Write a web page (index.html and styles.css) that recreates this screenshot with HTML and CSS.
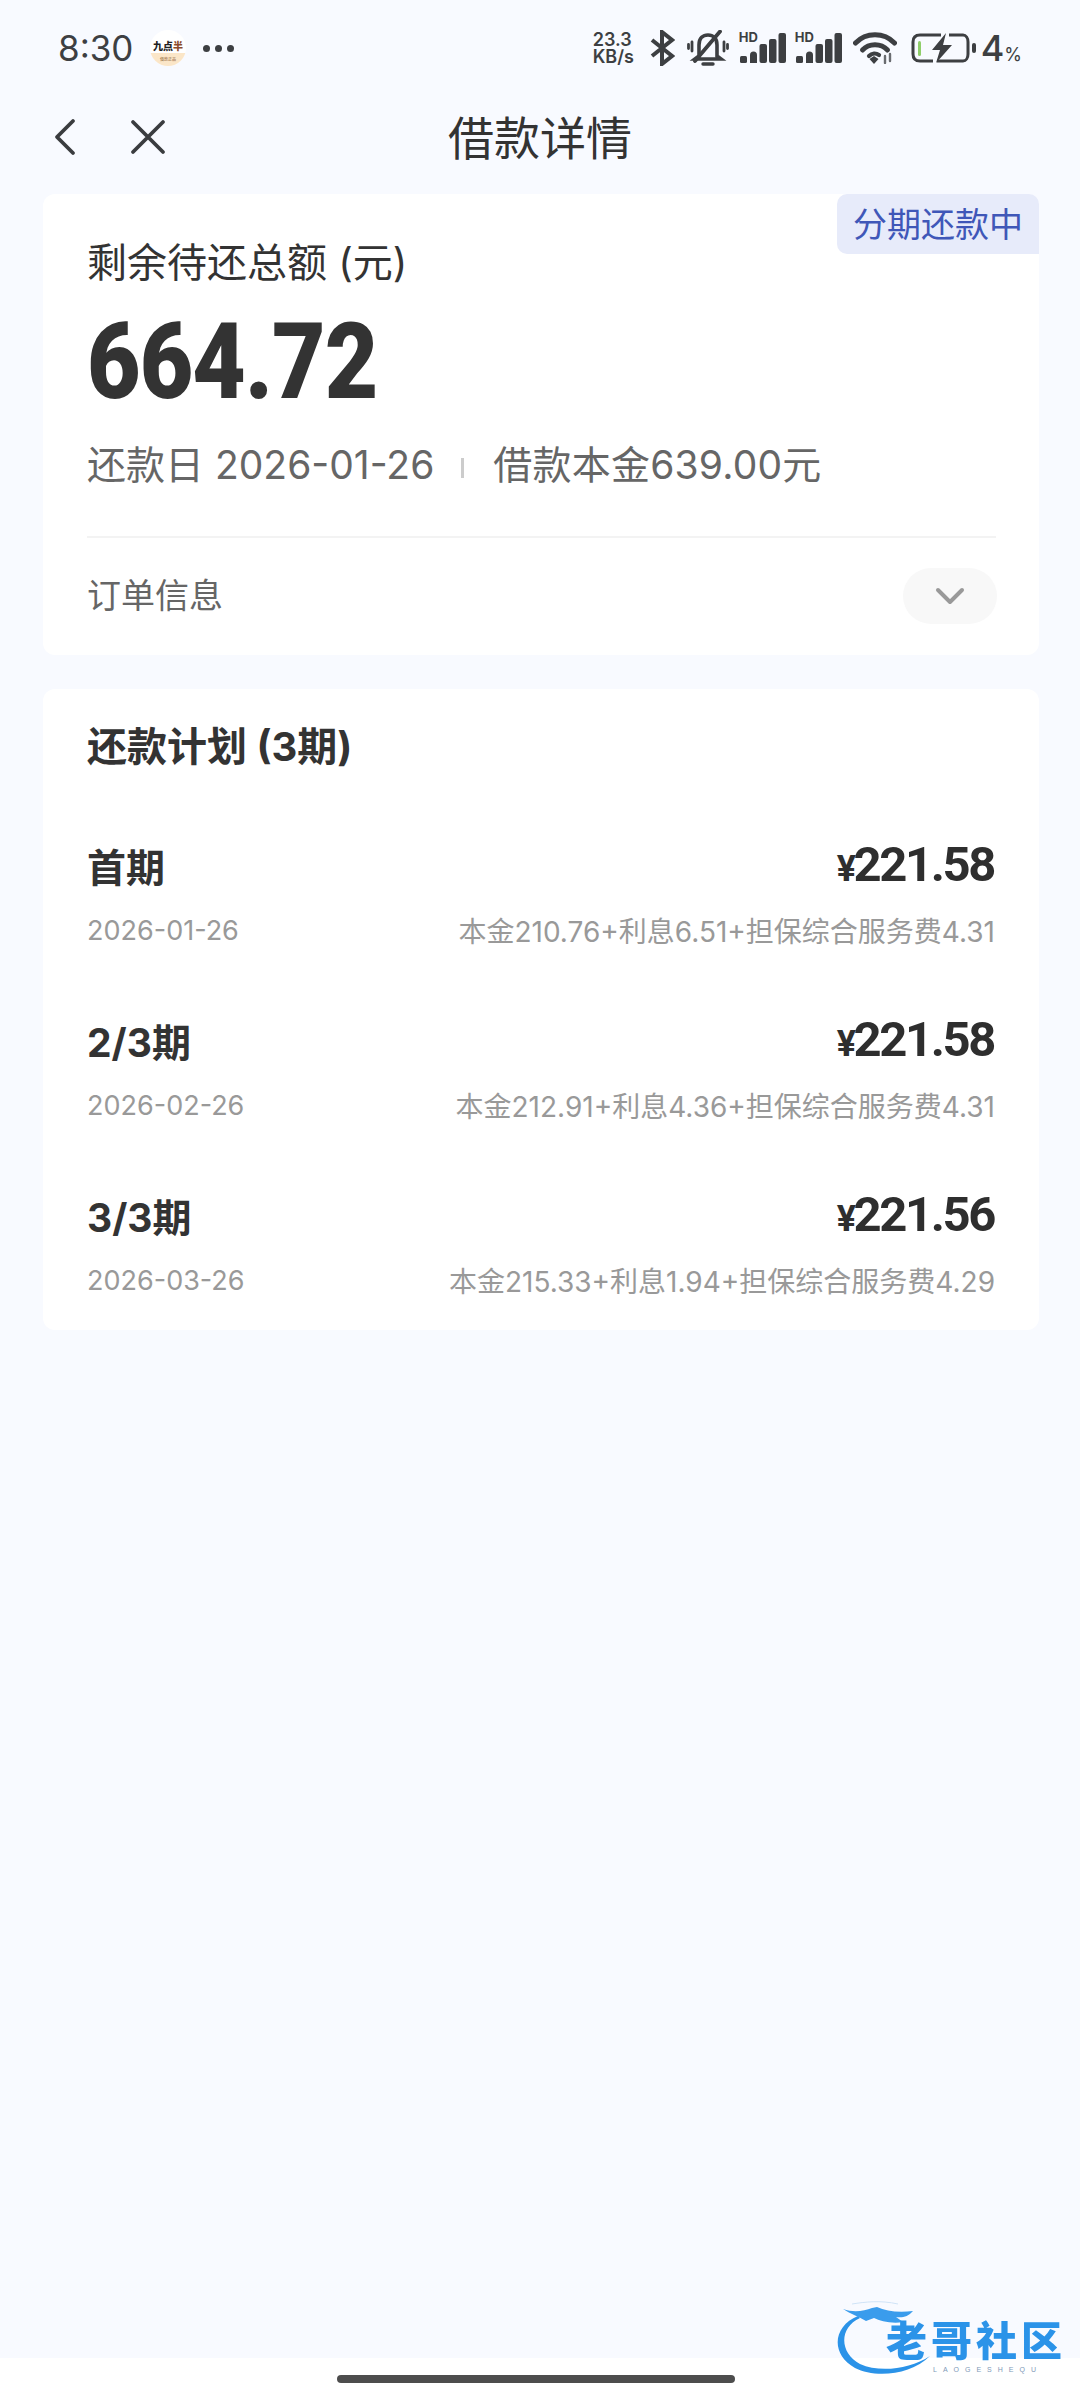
FILE: index.html
```html
<!DOCTYPE html>
<html lang="zh-CN">
<head>
<meta charset="utf-8">
<title>借款详情</title>
<link rel="stylesheet" href="styles.css">
</head>
<body>
<div class="page">
  <header class="status">
    <div class="status-left">
      <span class="clock">8:30</span>
      <span class="appicon"><span class="appicon-name">九点<b>半</b></span><span class="appicon-tag">借款正品</span></span>
      <span class="dots"><i></i><i></i><i></i></span>
    </div>
    <div class="status-right">
      <span class="speed"><span>23.3</span><span>KB/s</span></span>
      <svg class="ic-bt" viewBox="0 0 25 36"><path d="M2 10 L22 26 L12 34 V2 L22 10 L2 26" fill="none" stroke="#3d3f42" stroke-width="4" stroke-linejoin="miter"/></svg>
      <svg class="ic-bell" viewBox="0 0 42 36" fill="none" stroke="#3d3f42" stroke-linecap="round"><path d="M12 26 V15 C12 8 16 5 21 5 C26 5 30 8 30 15 V26 L34 29 H8 Z" stroke-width="3.600"/><path d="M16 34 H26" stroke-width="3.400"/><path d="M8 31 L33 1.500" stroke-width="3.800"/><path d="M5 12 V21 M1.500 14.500 V18.500 M37 12 V21 M40.500 14.500 V18.500" stroke-width="2.800"/></svg>
      <span class="sig"><span class="hd">HD</span><svg viewBox="0 0 47 32" class="ic-sig"><g fill="#3d3f42"><rect x="1" y="24" width="7" height="7" rx="1.500"/><path d="M11 23 a3.500 3.500 0 0 1 7 0 v8 h-7z"/><rect x="20.500" y="12" width="7.500" height="19" rx="2"/><rect x="30" y="7" width="7.500" height="24" rx="2"/><rect x="39.500" y="1" width="7.500" height="30" rx="2"/></g></svg></span>
      <span class="sig"><span class="hd">HD</span><svg viewBox="0 0 47 32" class="ic-sig"><g fill="#3d3f42"><rect x="1" y="24" width="7" height="7" rx="1.500"/><path d="M11 23 a3.500 3.500 0 0 1 7 0 v8 h-7z"/><rect x="20.500" y="12" width="7.500" height="19" rx="2"/><rect x="30" y="7" width="7.500" height="24" rx="2"/><rect x="39.500" y="1" width="7.500" height="30" rx="2"/></g></svg></span>
      <svg class="ic-wifi" viewBox="0 0 44 32" fill="none" stroke="#3d3f42" stroke-linecap="round"><path d="M2.500 11 C13 0 31 0 41.500 11" stroke-width="5"/><path d="M9.500 18 C16 11 28 11 34.500 18" stroke-width="5"/><path d="M16 24 C19 21 23 21 26 23" stroke-width="4.200"/><path d="M16.500 27 L21 32 L25.500 27 L21 24z" fill="#3d3f42" stroke="none"/><path d="M32 24 V31 M37 22 V29" stroke-width="2.400" stroke="#6a6c70"/></svg>
      <svg class="ic-batt" viewBox="0 0 66 30" fill="none"><path d="M22 28 H9 C4 28 2 25 2 21 V9 C2 5 4 2 9 2 H30 M38 2 H52 C55 2 57 5 57 9 V21 C57 25 55 28 52 28 H26" stroke="#3d3f42" stroke-width="3"/><rect x="7" y="8" width="3" height="15" rx="1.500" fill="#8fce6a"/><path d="M35 0 L21 17 H29 L25 30 L41 12 H32 Z" fill="#3d3f42"/><rect x="61" y="10" width="4" height="10" rx="2" fill="#3d3f42"/></svg>
      <span class="batt-num">4<small>%</small></span>
    </div>
  </header>

  <nav class="nav">
    <div class="nav-icons">
      <svg class="ic-back" viewBox="0 0 24 38" fill="none"><path d="M20 3 L4 19 L20 35" stroke="#3a3c3f" stroke-width="3.800" stroke-linecap="round" stroke-linejoin="round"/></svg>
      <svg class="ic-close" viewBox="0 0 36 36" fill="none"><path d="M3 3 L33 33 M33 3 L3 33" stroke="#3a3c3f" stroke-width="3.800" stroke-linecap="round"/></svg>
    </div>
    <h1 class="nav-title">借款详情</h1>
  </nav>

  <main class="content">
    <section class="card summary">
      <span class="badge">分期还款中</span>
      <p class="sum-label">剩余待还总额 (元)</p>
      <p class="sum-amount">664.72</p>
      <p class="sum-meta"><span>还款日 2026-01-26</span><i class="sep"></i><span>借款本金639.00元</span></p>
      <div class="order">
        <span>订单信息</span>
        <span class="pill"><svg viewBox="0 0 30 18" class="ic-chev" fill="none"><path d="M3 3 L15 15 L27 3" stroke="#999" stroke-width="4" stroke-linecap="round" stroke-linejoin="round"/></svg></span>
      </div>
    </section>

    <section class="card plan">
      <h2 class="plan-title">还款计划 (3期)</h2>
      <div class="row">
        <div class="row-top"><span class="term">首期</span><span class="money"><em>¥</em>221.58</span></div>
        <div class="row-sub"><span>2026-01-26</span><span class="row-detail">本金210.76+利息6.51+担保综合服务费4.31</span></div>
      </div>
      <div class="row">
        <div class="row-top"><span class="term">2/3期</span><span class="money"><em>¥</em>221.58</span></div>
        <div class="row-sub"><span>2026-02-26</span><span class="row-detail">本金212.91+利息4.36+担保综合服务费4.31</span></div>
      </div>
      <div class="row">
        <div class="row-top"><span class="term">3/3期</span><span class="money"><em>¥</em>221.56</span></div>
        <div class="row-sub"><span>2026-03-26</span><span class="row-detail">本金215.33+利息1.94+担保综合服务费4.29</span></div>
      </div>
    </section>
  </main>

  <footer class="foot"><span class="homebar"></span></footer>

  <div class="watermark">
    <svg class="wm-art" viewBox="0 0 300 120" fill="none"><path d="M80 38 C58 48 60 74 80 84 C100 93 130 89 150 76 C130 96 94 98 75 88 C50 74 53 46 78 36 Z" fill="#2b93e8"/><path d="M63 29 C74 33 84 31 92 28 L97 27 C106 31 118 33 133 31 C128 37 122 38 116 37 L123 42 C112 44 100 41 94 38 L86 41 C78 36 70 34 63 29 Z" fill="#3a9cec"/><path d="M72 24 C85 22 100 20 118 24" stroke="#cfe3f7" stroke-width="1"/></svg>
    <span class="wm-name">老哥社区</span>
    <span class="wm-sub">LAOGESHEQU</span>
  </div>
</div>
</body>
</html>
```

FILE: styles.css
```css
* { box-sizing: border-box; margin: 0; padding: 0; }
html, body { width: 1080px; height: 2400px; overflow: hidden; background: #f8faff; }
body { font-family: Inter, "Noto Sans CJK SC", "Noto Sans", sans-serif; color: #333; }
.page { position: relative; width: 1080px; height: 2400px; display: flex; flex-direction: column; }

.status { height: 96px; flex: none; display: flex; justify-content: space-between; align-items: center; padding: 0 58px 0 58px; }
.status-left { display: flex; align-items: center; }
.clock { font: 400 35px/1 Inter, sans-serif; color: #3d3f42; width: 92px; }
.appicon { width: 36px; height: 36px; border-radius: 50%; background: #fff; display: flex; flex-direction: column; align-items: center; justify-content: flex-end; overflow: hidden; }
.appicon-name { font-size: 10px; line-height: 14px; font-weight: 900; color: #222; }
.appicon-name b { color: #8a4b2a; }
.appicon-tag { width: 100%; height: 13px; background: #fbe6c8; font-size: 4px; line-height: 13px; text-align: center; color: #8a5a30; }
.dots { display: flex; gap: 5px; margin-left: 17px; }
.dots i { width: 7px; height: 7px; border-radius: 50%; background: #3d3f42; }

.status-right { display: flex; align-items: center; }
.speed { width: 48px; display: flex; flex-direction: column; font: 600 18px/17px Inter, sans-serif; color: #3d3f42; white-space: nowrap; }
.ic-bt { width: 25px; height: 36px; margin-left: 9px; }
.ic-bell { width: 42px; height: 36px; margin-left: 12px; }
.sig { position: relative; width: 47px; height: 32px; margin-left: 10px; display: block; }
.sig + .sig { margin-left: 9px; }
.hd { position: absolute; left: 0; top: -1px; font: 700 13px/13px Inter, sans-serif; color: #3d3f42; }
.ic-sig { width: 47px; height: 32px; display: block; }
.ic-wifi { width: 44px; height: 32px; margin-left: 11px; }
.ic-batt { width: 66px; height: 30px; margin-left: 14px; }
.batt-num { margin-left: 4px; font: 500 36px/1 Inter, sans-serif; color: #3d3f42; display: flex; align-items: baseline; }
.batt-num small { font-size: 18px; font-weight: 400; }

.nav { position: relative; height: 82px; flex: none; display: flex; align-items: center; justify-content: center; }
.nav-icons { position: absolute; left: 53px; top: 22px; display: flex; align-items: center; gap: 53px; }
.ic-back { width: 24px; height: 38px; }
.ic-close { width: 36px; height: 36px; }
.nav-title { font-family: "Noto Sans CJK SC", sans-serif; font-size: 46px; font-weight: 400; line-height: 58px; color: #333; margin-bottom: 5px; }

.content { flex: 1; padding: 16px 41px 0 43px; display: flex; flex-direction: column; gap: 34px; }
.card { background: #fff; border-radius: 12px; padding: 0 43px 0 44px; position: relative; }

.summary { height: 461px; padding-top: 43px; }
.badge { position: absolute; right: 0; top: 0; width: 202px; height: 60px; background: #e7ebfa; border-radius: 10px 10px 0 10px; color: #3f57b8; font-family: "Noto Sans CJK SC", sans-serif; font-size: 34px; line-height: 58px; text-align: center; }
.sum-label { font-size: 40px; line-height: 52px; color: #333; white-space: nowrap; }
.sum-amount { font: 900 105px/110px Roboto, sans-serif; color: #333; letter-spacing: -1px; margin-top: 19px; transform: scaleX(0.88); transform-origin: left center; }
.sum-meta { display: flex; align-items: center; margin-top: 20px; font-size: 39px; line-height: 54px; color: #666; white-space: nowrap; }
.sep { width: 3px; height: 20px; background: #ccc; margin: 6px 29px 0 27px; }
.sum-meta span:last-child { letter-spacing: 0.200px; }
.order { margin-top: 44px; height: 89px; border-top: 2px solid #f3f3f3; display: flex; align-items: center; justify-content: space-between; font-size: 34px; color: #666; padding-top: 28px; }
.order > span:first-child { margin-top: -4px; }
.pill { width: 94px; height: 56px; border-radius: 28px; background: #f8f8f8; display: flex; align-items: center; justify-content: center; margin-right: -1px; }
.ic-chev { width: 30px; height: 18px; }

.plan { height: 641px; padding-top: 34px; }
.plan-title { font-size: 40px; line-height: 48px; font-weight: 700; color: #333; margin-bottom: 66px; white-space: nowrap; }
.row { height: 175px; padding-right: 1px; }
.row-top { height: 60px; display: flex; justify-content: space-between; align-items: center; }
.term { font-size: 39px; font-weight: 700; color: #333; line-height: 50px; margin-top: 1px; }
.money { font: 700 49px/60px Roboto, sans-serif; color: #2e2e2e; letter-spacing: -2.400px; padding-right: 1px; }
.money em { font-style: normal; font-size: 36px; }
.row-sub { margin-top: 13px; height: 40px; display: flex; justify-content: space-between; align-items: center; font-size: 27px; color: #999; white-space: nowrap; }
.row-detail { font-size: 28px; }

.foot { height: 42px; flex: none; background: #fff; display: flex; justify-content: center; align-items: flex-start; padding-top: 17px; }
.homebar { width: 398px; height: 8px; border-radius: 4px; background: #4d4d4d; margin-right: 8px; }

.watermark { position: absolute; left: 780px; top: 2280px; width: 300px; height: 120px; }
.wm-art { position: absolute; left: 0; top: 0; width: 300px; height: 120px; filter: blur(0.6px); }
.wm-name { position: absolute; left: 106px; top: 46px; font-family: "Liberation Sans", "Noto Sans CJK SC", sans-serif; font-size: 41px; line-height: 32px; letter-spacing: 4px; font-weight: 900; color: #2b93e8; white-space: nowrap; filter: blur(0.5px); }
.wm-sub { position: absolute; left: 153px; top: 85px; font: 400 7px/9px "Liberation Sans", sans-serif; letter-spacing: 6px; color: #7f9ab8; white-space: nowrap; }
```
